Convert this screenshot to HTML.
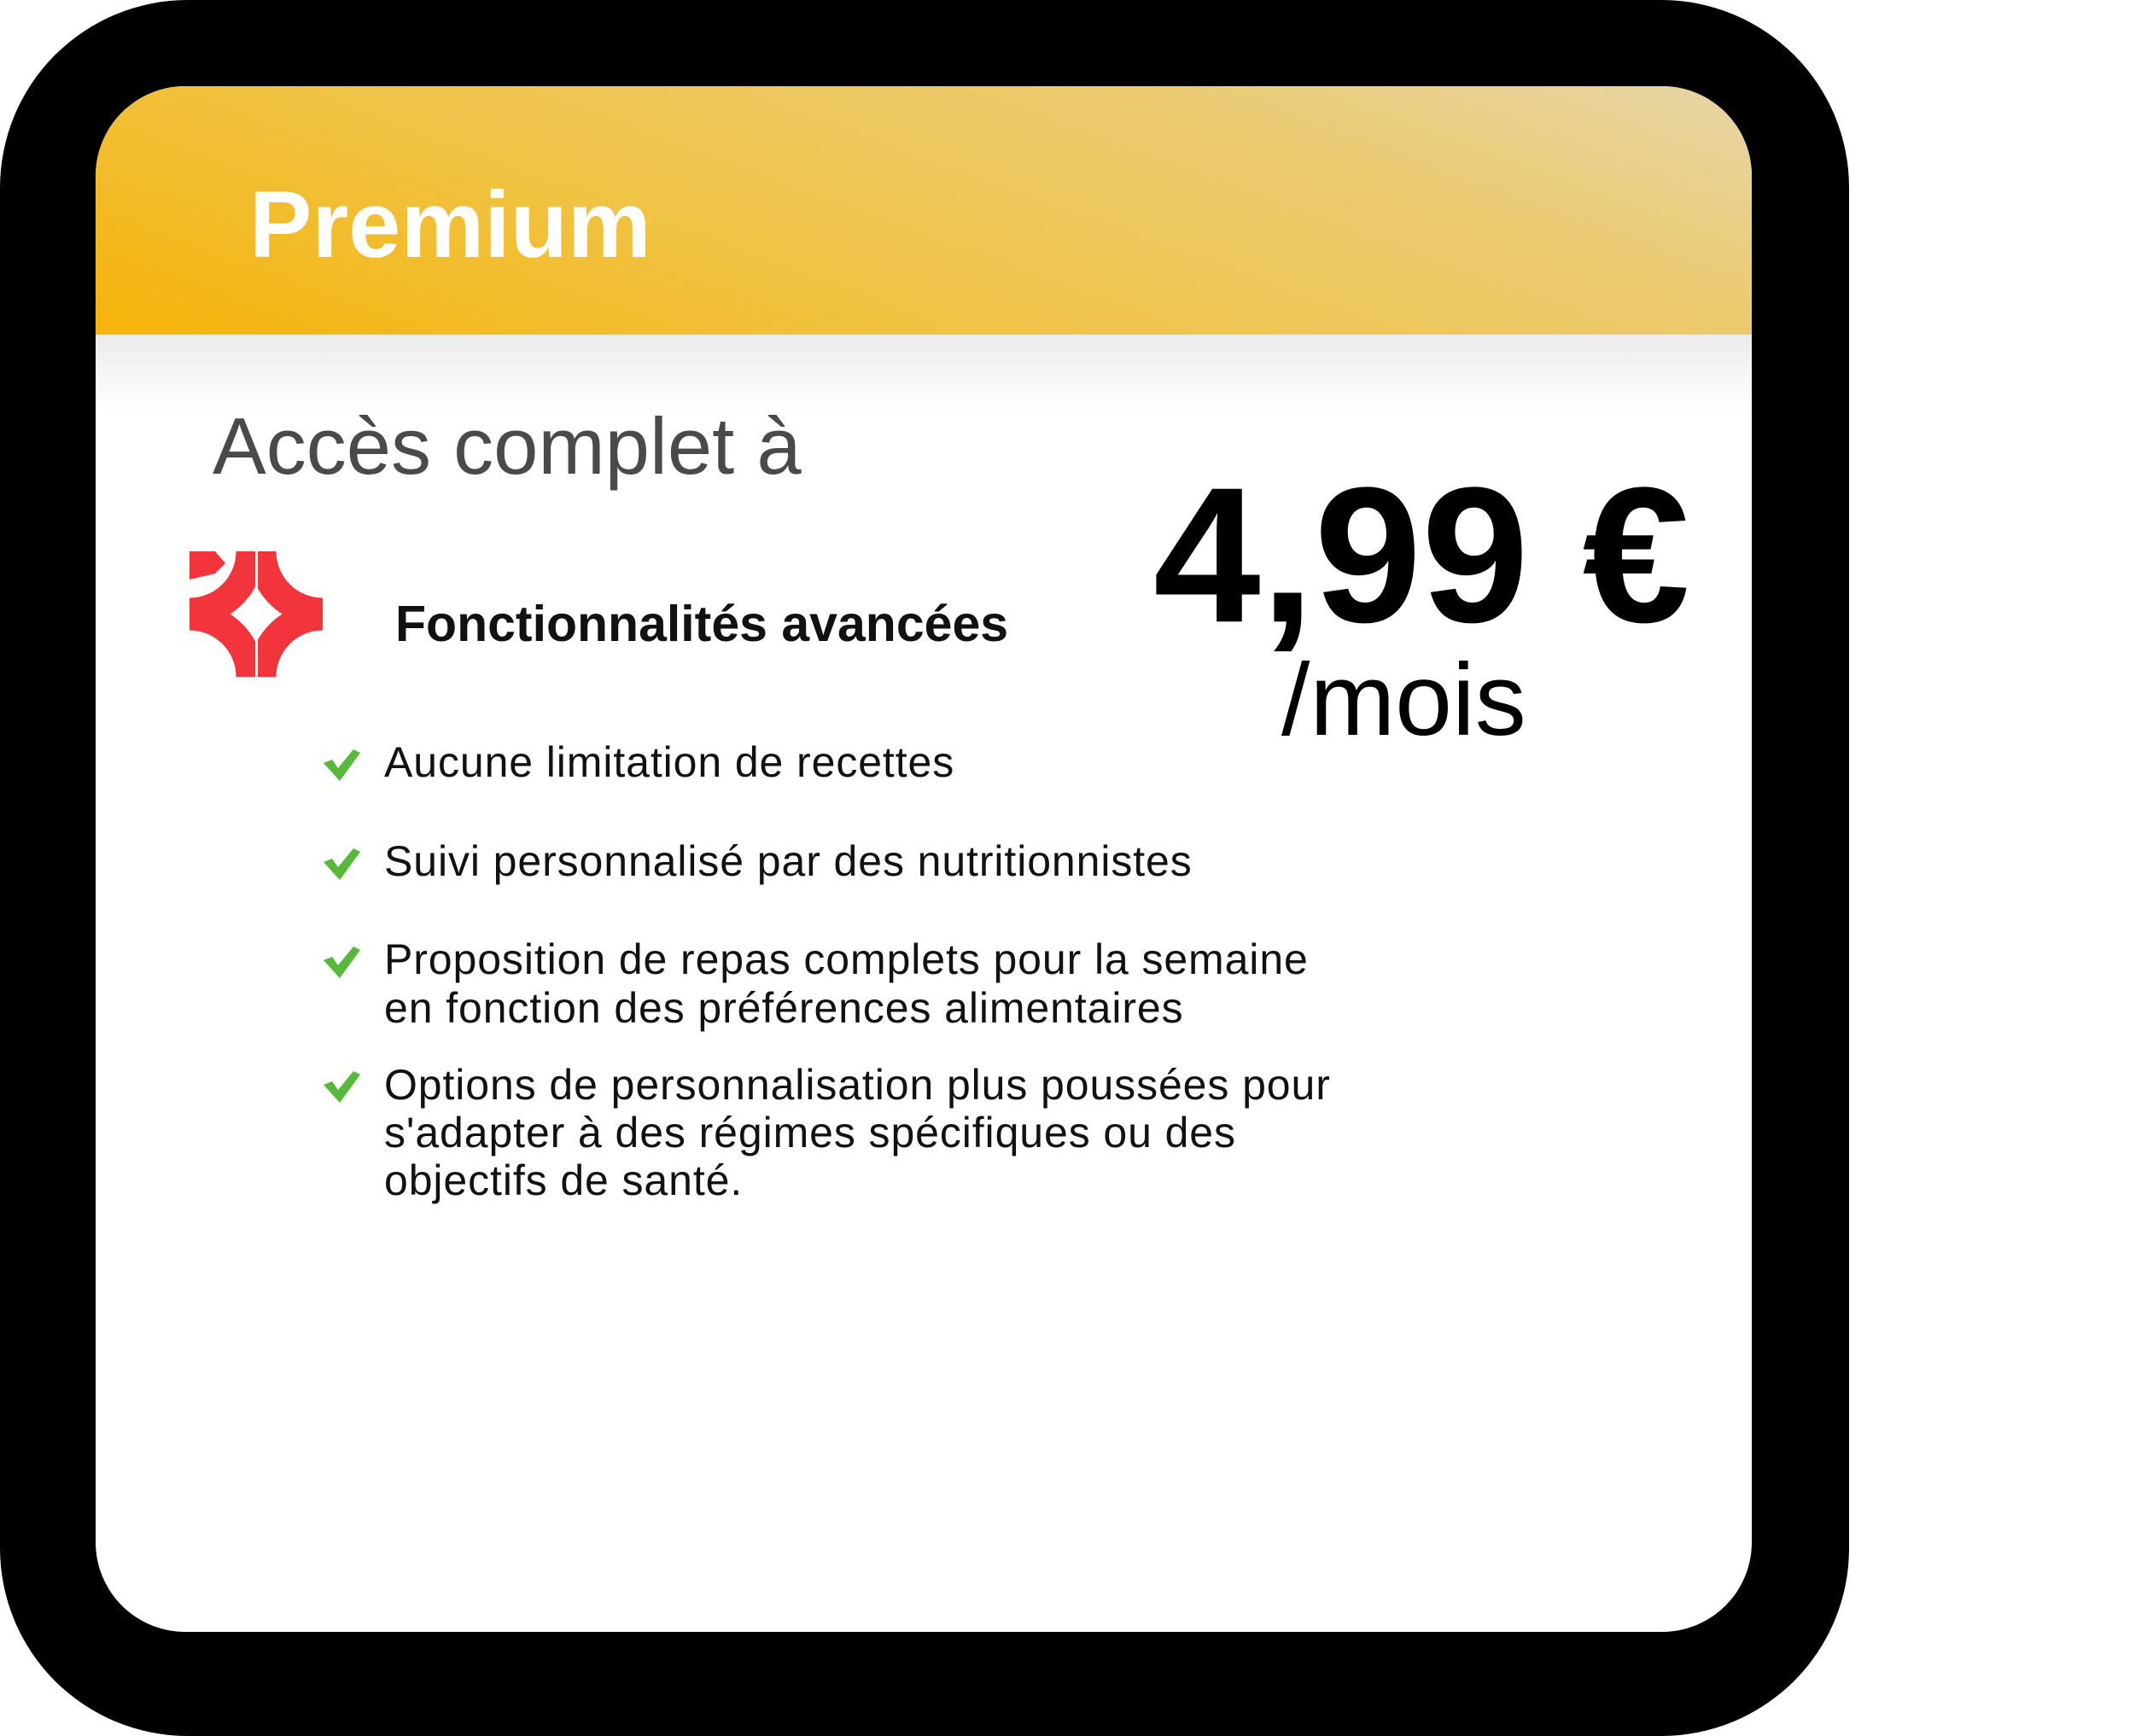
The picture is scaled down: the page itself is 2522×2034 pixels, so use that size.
<!DOCTYPE html>
<html><head><meta charset="utf-8"><style>
html,body{margin:0;padding:0;}
body{width:2522px;height:2034px;position:relative;background:#fff;overflow:hidden;font-family:"Liberation Sans",sans-serif;}
.bg{position:absolute;left:0;top:0;width:2166px;height:2034px;background:#000;border-radius:220px;}
.card{position:absolute;left:112px;top:101px;width:1940px;height:1811px;background:#fff;border-radius:105px;overflow:hidden;}
.head{position:absolute;left:0;top:0;width:100%;height:291px;background:linear-gradient(20deg,#f6b30a 0%,#f0c448 40%,#ebcb74 75%,#e6d6a8 100%);}
.shadow{position:absolute;left:0;top:291px;width:100%;height:90px;background:linear-gradient(#ececec,#fff);}
.t{position:absolute;white-space:nowrap;line-height:1;}
.li{font-size:50px;color:#111;letter-spacing:0.9px;}
.ck{position:absolute;}
</style></head><body>
<div class="bg"></div>
<div class="card">
 <div class="head"></div>
 <div class="shadow"></div>
</div>
<div class="t" style="left:292px;top:297px;transform:translateY(-80%);font-size:110px;font-weight:bold;color:#fff;">Premium</div>
<div class="t" style="left:249px;top:551px;transform:translateY(-80%);font-size:94px;color:#4a4a4a;">Accès complet à</div>
<svg style="position:absolute;left:222px;top:646px" width="156" height="147" viewBox="0 0 156 147">
 <defs><clipPath id="c"><rect width="156" height="147"/></clipPath></defs>
 <g clip-path="url(#c)">
  <rect width="156" height="147" fill="#fff"/>
  <circle cx="0" cy="0" r="71" fill="none" stroke="#f2353c" stroke-width="33"/>
  <circle cx="156" cy="0" r="71" fill="none" stroke="#f2353c" stroke-width="33"/>
  <circle cx="0" cy="147" r="71" fill="none" stroke="#f2353c" stroke-width="33"/>
  <circle cx="156" cy="147" r="71" fill="none" stroke="#f2353c" stroke-width="33"/>
  <path d="M0 0 L30 0 L42 14 L30 26 L0 33 Z" fill="#f2353c"/>
  <rect x="77" y="0" width="3" height="147" fill="#fff"/>
 </g>
</svg>
<div class="t" style="left:463px;top:749px;transform:translateY(-80%);font-size:59px;font-weight:bold;color:#111;">Fonctionnalités avancées</div>
<div class="t" style="left:1351px;top:718px;transform:translateY(-80%);font-size:226px;font-weight:bold;color:#000;">4,99 €</div>
<div class="t" style="left:1501px;top:856px;transform:translateY(-80%);font-size:120px;color:#000;">/mois</div>

<svg class="ck" style="left:378px;top:877px" width="44" height="38" viewBox="0 0 44 38"><path d="M1 17 L11 13 L18 23 L36 1 L44 5 L20 38 Z" fill="#57b93a"/></svg>
<svg class="ck" style="left:378px;top:993px" width="44" height="38" viewBox="0 0 44 38"><path d="M1 17 L11 13 L18 23 L36 1 L44 5 L20 38 Z" fill="#57b93a"/></svg>
<svg class="ck" style="left:378px;top:1108px" width="44" height="38" viewBox="0 0 44 38"><path d="M1 17 L11 13 L18 23 L36 1 L44 5 L20 38 Z" fill="#57b93a"/></svg>
<svg class="ck" style="left:378px;top:1254px" width="44" height="38" viewBox="0 0 44 38"><path d="M1 17 L11 13 L18 23 L36 1 L44 5 L20 38 Z" fill="#57b93a"/></svg>

<div class="t li" style="left:450px;top:908px;transform:translateY(-80%);">Aucune limitation de recettes</div>
<div class="t li" style="left:450px;top:1024px;transform:translateY(-80%);">Suivi personnalisé par des nutritionnistes</div>
<div class="t li" style="left:450px;top:1139px;transform:translateY(-80%);">Proposition de repas complets pour la semaine</div>
<div class="t li" style="left:450px;top:1196px;transform:translateY(-80%);">en fonction des préférences alimentaires</div>
<div class="t li" style="left:450px;top:1286px;transform:translateY(-80%);">Options de personnalisation plus poussées pour</div>
<div class="t li" style="left:450px;top:1342px;transform:translateY(-80%);">s'adapter à des régimes spécifiques ou des</div>
<div class="t li" style="left:450px;top:1398px;transform:translateY(-80%);">objectifs de santé.</div>
</body></html>
